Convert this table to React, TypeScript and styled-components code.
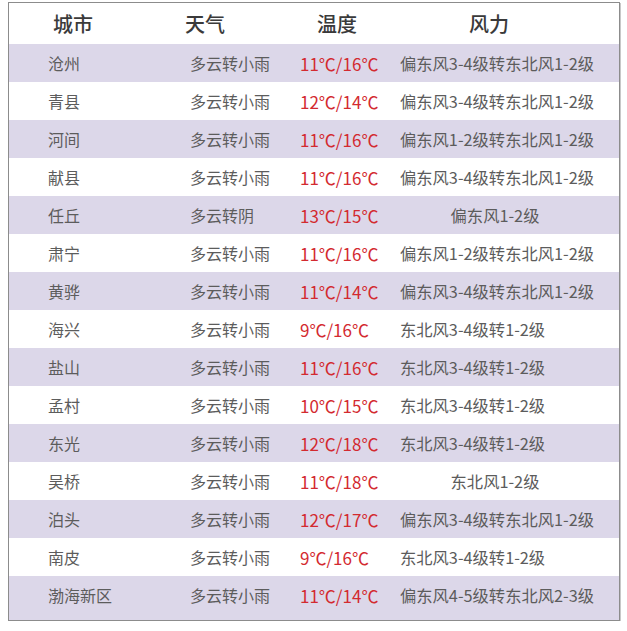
import React from "react";
import styled, { createGlobalStyle } from "styled-components";

const Global = createGlobalStyle`
  html, body { margin: 0; padding: 0; background: #ffffff; }
  body { font-family: "Noto Sans CJK SC", "Noto Sans", sans-serif; }
`;

const Frame = styled.div`
  margin: 2px 0 0 8px;
  width: 610px;
  border: 1px solid #8c8c8c;
  box-shadow: 1px 1px 0 #c8c8c8;
  background: #ffffff;
`;

const Grid = "171px 110px 100px 229px";

const HeaderRow = styled.div`
  display: grid;
  grid-template-columns: ${Grid};
  height: 41px;
  align-items: center;
  background: #ffffff;
`;

const HeaderCell = styled.div<{ $pl: number }>`
  padding-left: ${(p) => p.$pl}px;
  font-size: 20px;
  font-weight: 500;
  color: #3a3a3a;
  white-space: nowrap;
`;

const Row = styled.div<{ $shade: boolean; $tall?: boolean }>`
  display: grid;
  grid-template-columns: ${Grid};
  height: ${(p) => (p.$tall ? 44 : 38)}px;
  align-items: center;
  padding-bottom: ${(p) => (p.$tall ? 6 : 0)}px;
  box-sizing: border-box;
  background: ${(p) => (p.$shade ? "#dcd7e9" : "#ffffff")};
`;

const Cell = styled.div<{ $pl?: number }>`
  padding-left: ${(p) => p.$pl ?? 10}px;
  font-size: 16px;
  color: #5c5c5c;
  white-space: nowrap;
`;

const Temp = styled(Cell)`
  font-size: 17px;
  color: #d32a30;
`;

const Wind = styled(Cell)<{ $center?: boolean }>`
  font-size: 16.3px;
  padding-right: 29px;
  text-align: ${(p) => (p.$center ? "center" : "left")};
`;

type Item = { city: string; weather: string; temp: string; wind: string; center?: boolean };

const data: Item[] = [
  { city: "沧州", weather: "多云转小雨", temp: "11℃/16℃", wind: "偏东风3-4级转东北风1-2级" },
  { city: "青县", weather: "多云转小雨", temp: "12℃/14℃", wind: "偏东风3-4级转东北风1-2级" },
  { city: "河间", weather: "多云转小雨", temp: "11℃/16℃", wind: "偏东风1-2级转东北风1-2级" },
  { city: "献县", weather: "多云转小雨", temp: "11℃/16℃", wind: "偏东风3-4级转东北风1-2级" },
  { city: "任丘", weather: "多云转阴", temp: "13℃/15℃", wind: "偏东风1-2级", center: true },
  { city: "肃宁", weather: "多云转小雨", temp: "11℃/16℃", wind: "偏东风1-2级转东北风1-2级" },
  { city: "黄骅", weather: "多云转小雨", temp: "11℃/14℃", wind: "偏东风3-4级转东北风1-2级" },
  { city: "海兴", weather: "多云转小雨", temp: "9℃/16℃", wind: "东北风3-4级转1-2级" },
  { city: "盐山", weather: "多云转小雨", temp: "11℃/16℃", wind: "东北风3-4级转1-2级" },
  { city: "孟村", weather: "多云转小雨", temp: "10℃/15℃", wind: "东北风3-4级转1-2级" },
  { city: "东光", weather: "多云转小雨", temp: "12℃/18℃", wind: "东北风3-4级转1-2级" },
  { city: "吴桥", weather: "多云转小雨", temp: "11℃/18℃", wind: "东北风1-2级", center: true },
  { city: "泊头", weather: "多云转小雨", temp: "12℃/17℃", wind: "偏东风3-4级转东北风1-2级" },
  { city: "南皮", weather: "多云转小雨", temp: "9℃/16℃", wind: "东北风3-4级转1-2级" },
  { city: "渤海新区", weather: "多云转小雨", temp: "11℃/14℃", wind: "偏东风4-5级转东北风2-3级" },
];

export default function App() {
  return (
    <>
      <Global />
      <Frame>
        <HeaderRow>
          <HeaderCell $pl={44}>城市</HeaderCell>
          <HeaderCell $pl={5}>天气</HeaderCell>
          <HeaderCell $pl={27}>温度</HeaderCell>
          <HeaderCell $pl={79}>风力</HeaderCell>
        </HeaderRow>
        {data.map((d, i) => (
          <Row key={d.city} $shade={i % 2 === 0} $tall={i === data.length - 1}>
            <Cell $pl={39}>{d.city}</Cell>
            <Cell>{d.weather}</Cell>
            <Temp>{d.temp}</Temp>
            <Wind $center={d.center}>{d.wind}</Wind>
          </Row>
        ))}
      </Frame>
    </>
  );
}
